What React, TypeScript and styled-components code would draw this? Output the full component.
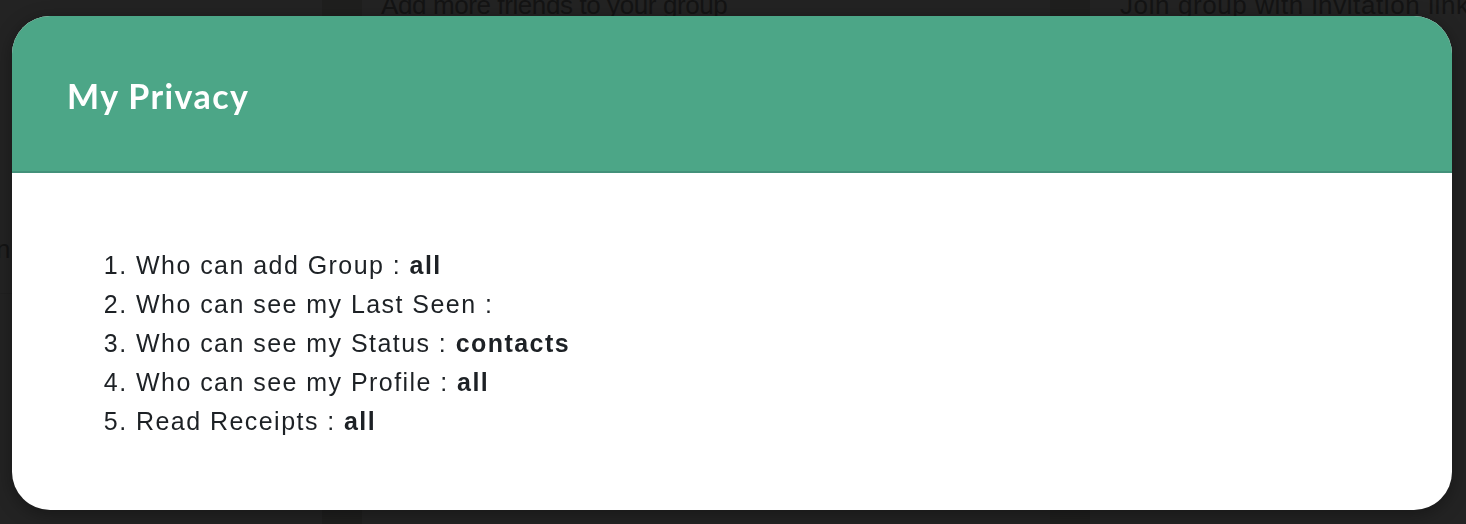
import React from "react";
import styled, { createGlobalStyle } from "styled-components";

const Global = createGlobalStyle`
  html, body { margin: 0; padding: 0; background: #232323; }
  body { font-family: "Liberation Sans", Arial, sans-serif; overflow: hidden; }
  * { box-sizing: border-box; }
`;

const Page = styled.div`
  width: 1466px;
  height: 524px;
  background: #232323;
  overflow: hidden;
  display: flex;
  flex-direction: column;
`;

const TopRow = styled.div`
  display: grid;
  grid-template-columns: 322px 40px 688px 40px 1fr;
  height: 540px;
  margin-top: -10px;
`;

const Spacer = styled.div<{ $dark?: boolean }>`
  background: ${(p) => (p.$dark ? "#1f1f1e" : "transparent")};
`;

const BgCard = styled.div<{ $pad: number }>`
  padding: 0 0 0 ${(p) => p.$pad}px;
  font-size: 26px;
  line-height: 30px;
  letter-spacing: ${(p) => (p.$pad > 25 ? "0.6px" : "-0.4px")};
  color: #141414;
  white-space: nowrap;
  overflow: hidden;
`;

const SideText = styled.div`
  font-size: 26px;
  line-height: 30px;
  color: #141414;
  margin-left: -4px;
  margin-top: 244px;
  border-bottom: 1px solid #202020;
  padding-bottom: 29px;
`;

const Overlay = styled.div`
  position: fixed;
  inset: 0;
  display: flex;
  align-items: flex-start;
  justify-content: flex-start;
  padding: 16px 14px 14px 12px;
`;

const Modal = styled.div`
  width: 1440px;
  height: 494px;
  background: #ffffff;
  border-radius: 38px;
  overflow: hidden;
  box-shadow: 0 4px 18px rgba(0, 0, 0, 0.35);
  display: flex;
  flex-direction: column;
`;

const Header = styled.div`
  height: 157px;
  background: #4ca687;
  border-bottom: 2px solid #43917a;
  display: flex;
  align-items: center;
  padding: 3px 0 0 55px;
`;

const Title = styled.h2`
  margin: 0;
  font-family: Lato, "Open Sans", sans-serif;
  font-weight: 700;
  font-size: 34px;
  color: #ffffff;
  letter-spacing: 1.4px;
`;

const Body = styled.div`
  padding: 73px 0 0 60px;
`;

const List = styled.ol`
  margin: 0;
  padding-left: 64px;
  font-family: "Liberation Sans", Arial, sans-serif;
  font-size: 25px;
  line-height: 39px;
  letter-spacing: 1.45px;
  color: #1d2125;
`;

const Item = styled.li`
  padding-left: 0;
`;

const Value = styled.b`
  font-weight: 700;
`;

const items: [string, string][] = [
  ["Who can add Group", "all"],
  ["Who can see my Last Seen", ""],
  ["Who can see my Status", "contacts"],
  ["Who can see my Profile", "all"],
  ["Read Receipts", "all"],
];

export default function App() {
  return (
    <>
      <Global />
      <Page>
        <TopRow>
          <Spacer>
            <SideText>n</SideText>
          </Spacer>
          <Spacer $dark />
          <BgCard $pad={19}>Add more friends to your group</BgCard>
          <Spacer $dark />
          <BgCard $pad={30}>Join group with invitation link</BgCard>
        </TopRow>
      </Page>
      <Overlay>
        <Modal>
          <Header>
            <Title>My Privacy</Title>
          </Header>
          <Body>
            <List>
              {items.map(([label, value]) => (
                <Item key={label}>
                  {label} : {value && <Value>{value}</Value>}
                </Item>
              ))}
            </List>
          </Body>
        </Modal>
      </Overlay>
    </>
  );
}
